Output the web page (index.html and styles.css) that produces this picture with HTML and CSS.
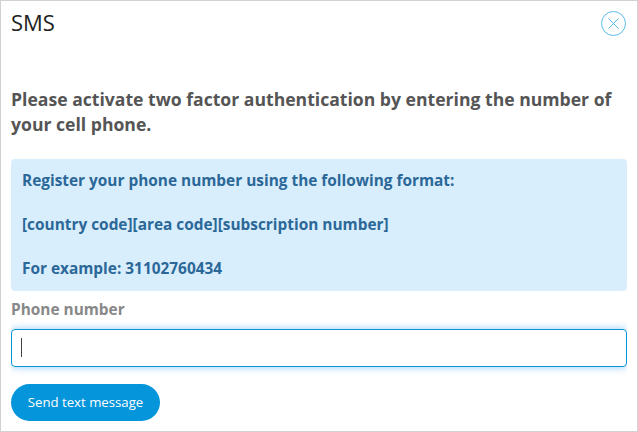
FILE: index.html
```html
<!DOCTYPE html>
<html lang="en">
<head>
<meta charset="utf-8">
<title>SMS</title>
<link rel="stylesheet" href="styles.css">
</head>
<body>
<main class="dialog">
  <header class="header">
    <h1 class="title">SMS</h1>
    <button class="close" type="button">
      <svg width="26" height="26" viewBox="0 0 26 26" fill="none" stroke="#5bbbe9"><circle cx="12.5" cy="12.5" r="12"/><path d="M7.5 7.5l10 10M17.5 7.5l-10 10"/></svg>
    </button>
  </header>
  <p class="lead">Please activate two factor authentication by entering the number of your cell phone.</p>
  <div class="info">
    <p>Register your phone number using the following format:</p>
    <p>[country code][area code][subscription number]</p>
    <p>For example: 31102760434</p>
  </div>
  <div class="label">Phone number</div>
  <div class="field-wrap"><div class="field"><span class="caret"></span></div></div>
  <button class="send" type="button">Send text message</button>
</main>
</body>
</html>
```
FILE: styles.css
```css
* { box-sizing: border-box; }
body { margin: 0; font-family: "Open Sans", sans-serif; background: #fff; }
.dialog { width: 638px; height: 432px; border: 1px solid #d2d2d2; padding: 9px 10px; overflow: hidden; }
.header { display: flex; justify-content: space-between; height: 77px; }
.title { margin: 0; font-size: 22px; line-height: 24px; font-weight: 400; color: #222; }
.close { width: 26px; height: 26px; margin-top: 1px; padding: 0; border: 0; background: none; }
.close svg { display: block; }
.lead { margin: 0; font-size: 17.6px; line-height: 25px; font-weight: 700; color: #555; }
.info { height: 132px; margin-top: 22px; padding: 11px; border-radius: 4px; background: #d9eefd; color: #2b6898; font-size: 15.4px; line-height: 22px; font-weight: 700; display: flex; flex-direction: column; gap: 22px; }
.info p { margin: 0; }
.label { margin-top: 8px; font-size: 15.4px; line-height: 22px; font-weight: 700; color: #888; }
.field-wrap { height: 55px; padding: 8px 0 9px; overflow: hidden; }
.field { height: 38px; padding: 8px 9px; border: 1px solid #0595db; border-radius: 4px; box-shadow: 0 0 8px rgba(82, 168, 236, .6); }
.caret { display: block; width: 1px; height: 19px; background: #444; }
.send { display: block; width: 149px; height: 37px; margin-top: 8px; padding: 0 0 2px; border: 0; border-radius: 19px; background: #0595db; color: #fff; font: 400 13.2px/20px "Open Sans", sans-serif; }
```
